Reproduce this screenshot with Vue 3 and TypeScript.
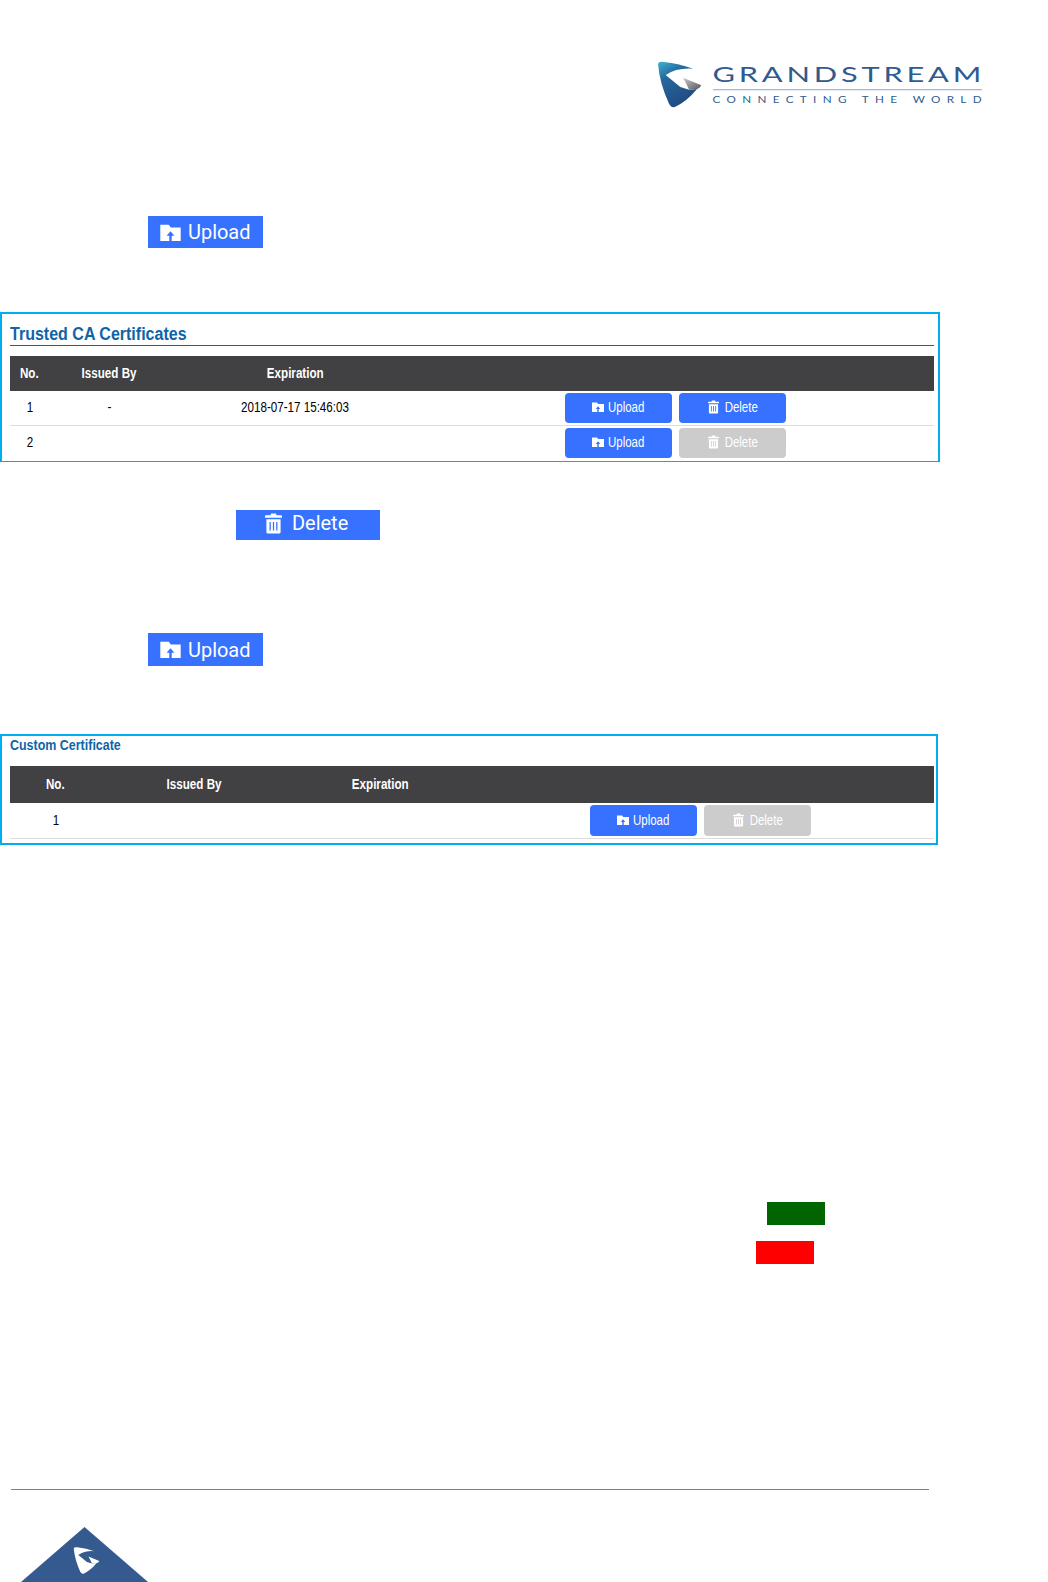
<script setup lang="ts">
interface Row { no: string; issued: string; expires: string; canDelete: boolean }
const trusted: Row[] = [
  { no: '1', issued: '-', expires: '2018-07-17 15:46:03', canDelete: true },
  { no: '2', issued: '', expires: '', canDelete: false },
]
const custom: Row[] = [{ no: '1', issued: '', expires: '', canDelete: false }]
const markOuter = 'M55 72Q56 63 72 65Q120 70 160 85Q110 82 78 104L122 140L148 148L172 146Q140 185 105 200Q95 203 88 190Q60 130 55 72Z'
const markInner = 'M130 112L185 135Q180 145 172 146L148 148Q140 130 130 112Z'
const folder = 'M0 .5H5L6.2 2H12V10H0Z'
const folderArrow = 'M6 4.2L8.3 6.9H6.7V10H5.3V6.9H3.7Z'
const bin = 'M4 .6Q4 0 4.6 0H7.4Q8 0 8 .6V1.2H11.4Q12 1.2 12 2V3H0V2Q0 1.2 .6 1.2H4ZM1 4H11V13.2Q11 14 10.2 14H1.8Q1 14 1 13.2Z'
const binBars = 'M3.2 6H4.1V12H3.2ZM5.55 6H6.45V12H5.55ZM7.9 6H8.8V12H7.9Z'
</script>

<template>
  <div class="page">
    <header class="brand">
      <svg class="logo" width="330" height="50" viewBox="0 0 330 50" role="img" aria-label="Grandstream">
        <defs>
          <linearGradient id="shield" x1="0" y1="0" x2="0.5" y2="1">
            <stop offset="0" stop-color="#3fb2cf" />
            <stop offset="0.35" stop-color="#26699f" />
            <stop offset="1" stop-color="#1f4a80" />
          </linearGradient>
          <linearGradient id="wing" x1="0" y1="0" x2="1" y2="1">
            <stop offset="0" stop-color="#c9cbce" />
            <stop offset="1" stop-color="#55585c" />
          </linearGradient>
        </defs>
        <g transform="translate(-18.3 -21.7) scale(.3333)">
          <path :d="markOuter" fill="url(#shield)" />
          <path :d="markInner" fill="url(#wing)" />
        </g>
        <text class="logo-name" transform="translate(54.5 19.7) scale(1.4 1)" textLength="192" lengthAdjust="spacing">GRANDSTREAM</text>
        <rect x="55" y="27.4" width="269" height="0.8" fill="#6f8fb5" />
        <text class="logo-tag" transform="translate(54.5 41.2) scale(1.3 1)" textLength="207" lengthAdjust="spacing">CONNECTING THE WORLD</text>
      </svg>
    </header>

    <div class="shot shot-upload shot-first">
      <svg class="shot-icon" width="21" height="17" viewBox="0 0 12 10">
        <path :d="folder" fill="#fff" />
        <path :d="folderArrow" fill="#3671ff" />
      </svg>
      <span class="shot-text">Upload</span>
    </div>

    <section class="panel panel-trusted">
      <h3 class="title-lg"><span>Trusted CA Certificates</span></h3>
      <div class="grid head">
        <span class="t">No.</span><span class="t">Issued By</span><span class="t">Expiration</span>
      </div>
      <div v-for="r in trusted" :key="r.no" class="grid row">
        <span class="t">{{ r.no }}</span><span class="t">{{ r.issued }}</span><span class="t">{{ r.expires }}</span>
        <div class="actions">
          <button class="btn">
            <svg width="12" height="10" viewBox="0 0 12 10"><path :d="folder" fill="#fff" /><path :d="folderArrow" fill="#3671ff" /></svg>
            <span class="lbl">Upload</span>
          </button>
          <button class="btn btn-del" :class="{ off: !r.canDelete }">
            <svg width="11" height="14" viewBox="0 0 12 14"><path :d="bin" fill="#fff" /><path :d="binBars" :fill="r.canDelete ? '#3671ff' : '#ccc'" /></svg>
            <span class="lbl">Delete</span>
          </button>
        </div>
      </div>
    </section>

    <div class="shot shot-delete">
      <svg class="shot-icon" width="17" height="21" viewBox="0 0 12 14"><path :d="bin" fill="#fff" /><path :d="binBars" fill="#3671ff" /></svg>
      <span class="shot-text">Delete</span>
    </div>

    <div class="shot shot-upload shot-second">
      <svg class="shot-icon" width="21" height="17" viewBox="0 0 12 10">
        <path :d="folder" fill="#fff" />
        <path :d="folderArrow" fill="#3671ff" />
      </svg>
      <span class="shot-text">Upload</span>
    </div>

    <section class="panel panel-custom">
      <h3 class="title-sm"><span>Custom Certificate</span></h3>
      <div class="grid head">
        <span class="t">No.</span><span class="t">Issued By</span><span class="t">Expiration</span>
      </div>
      <div v-for="r in custom" :key="r.no" class="grid row">
        <span class="t">{{ r.no }}</span><span class="t">{{ r.issued }}</span><span class="t">{{ r.expires }}</span>
        <div class="actions">
          <button class="btn">
            <svg width="12" height="10" viewBox="0 0 12 10"><path :d="folder" fill="#fff" /><path :d="folderArrow" fill="#3671ff" /></svg>
            <span class="lbl">Upload</span>
          </button>
          <button class="btn btn-del off">
            <svg width="11" height="14" viewBox="0 0 12 14"><path :d="bin" fill="#fff" /><path :d="binBars" fill="#ccc" /></svg>
            <span class="lbl">Delete</span>
          </button>
        </div>
      </div>
    </section>

    <div class="swatch green"></div>
    <div class="swatch red"></div>

    <footer class="foot">
      <div class="foot-rule"></div>
      <svg class="foot-mark" width="127" height="55" viewBox="0 0 127 55">
        <path d="M63.5 0L127 55H0Z" fill="#345a8f" />
        <g transform="translate(32 -2.5) scale(.2)">
          <path :d="markOuter" fill="#fff" transform="translate(50 50) scale(.98)" />
          <path :d="markInner" fill="#fff" transform="translate(50 50) scale(.98)" />
        </g>
      </svg>
    </footer>
  </div>
</template>

<style scoped>
.page {
  width: 1048px;
  height: 1582px;
  overflow: hidden;
  background: #fff;
  display: flex;
  flex-direction: column;
  align-items: flex-start;
  font-family: "Liberation Sans", Arial, sans-serif;
}
.brand { margin: 62px 0 0 658px; height: 45px; }
.logo { display: block; overflow: visible; }
.logo-name { font-family: Lato, "Liberation Sans", sans-serif; font-size: 22px; fill: #2f5b8f; }
.logo-tag { font-family: Lato, "Liberation Sans", sans-serif; font-size: 9px; fill: #2f5b8f; }

.shot {
  display: flex;
  align-items: center;
  background: #3671ff;
  color: #fff;
  font-family: Roboto, "Liberation Sans", sans-serif;
  font-size: 21px;
  box-sizing: border-box;
}
.shot-text { display: inline-block; transform: scaleX(.95); transform-origin: left center; }
.shot-upload { width: 115px; height: 32px; margin-left: 148px; padding-left: 12px; gap: 7px; }
.shot-first { margin-top: 109px; }
.shot-second { margin-top: 93px; height: 33px; }
.shot-delete { width: 144px; height: 30px; margin: 48px 0 0 236px; padding: 0 0 4px 29px; gap: 10px; }
.shot-icon { flex: none; }

.panel {
  box-sizing: border-box;
  border: 2px solid #00aeef;
  border-bottom-width: 1px;
  padding-left: 8px;
}
.panel-trusted { width: 940px; height: 150px; margin-top: 64px; padding-right: 4px; --cols: 39px 120px 252px 144px 1fr; --head: 35px; }
.panel-custom { width: 938px; height: 111px; margin-top: 68px; padding-right: 2px; border-bottom-width: 2px; --cols: 91px 187px 185px 117px 1fr; --head: 37px; }

.title-lg, .title-sm { font-weight: 700; color: #0f64a8; white-space: nowrap; box-sizing: border-box; }
.title-lg span, .title-sm span { display: inline-block; transform-origin: left center; transform: scaleX(.89); }
.title-lg {
  margin: 0 0 10px;
  height: 32px;
  border-bottom: 1px solid #0f64a8;
  padding-top: 11px;
  font-size: 18px;
  line-height: 19px;
}
.title-sm {
  margin: 0;
  height: 30px;
  padding-top: 2px;
  font-size: 14px;
  line-height: 15px;
}

.grid {
  display: grid;
  grid-template-columns: var(--cols);
  align-items: center;
  justify-items: center;
}
.t { display: inline-block; white-space: nowrap; transform: translateY(-1px) scaleX(.83); }
.head {
  height: var(--head);
  background: #414042;
  color: #fff;
  font-size: 14px;
  font-weight: 700;
}
.row {
  height: 35px;
  border-bottom: 1px solid #ddd;
  box-sizing: border-box;
  font-size: 14px;
  color: #000;
}
.panel-trusted .row:last-child { border-bottom: 0; height: 34px; }
.panel-custom .row { height: 36px; }
.actions {
  grid-column: 5;
  justify-self: start;
  display: flex;
  gap: 7px;
}
.btn {
  width: 107px;
  height: 30px;
  padding: 0;
  border: 0;
  border-radius: 4px;
  background: #3671ff;
  color: #fff;
  display: flex;
  align-items: center;
  justify-content: center;
  gap: 4px;
  font-family: inherit;
  font-size: 14px;
}
.btn svg { position: relative; top: -1px; }
.btn-del { gap: 6px; }
.panel-custom .btn { height: 31px; }
.btn.off { background: #ccc; }
.lbl { display: inline-block; transform: translateY(-1px) scaleX(.82); margin: 0 -4px; }

.swatch { width: 58px; height: 23px; }
.green { background: #006400; margin: 357px 0 0 767px; }
.red { background: #ff0000; margin: 16px 0 0 756px; }

.foot { margin: 225px 0 0; width: 100%; }
.foot-rule { width: 918px; height: 1px; margin-left: 11px; background: #808080; }
.foot-mark { display: block; margin: 37px 0 0 21px; }
</style>
